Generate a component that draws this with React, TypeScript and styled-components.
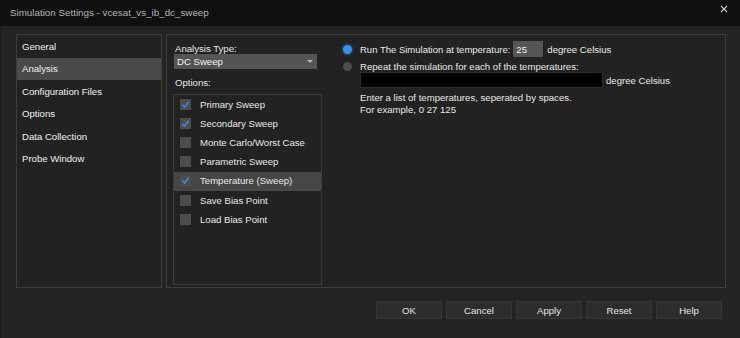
import * as React from "react";
import styled, { createGlobalStyle } from "styled-components";

const GlobalStyle = createGlobalStyle`
  html, body {
    margin: 0;
    padding: 0;
    background: #242522;
  }
  * {
    box-sizing: border-box;
  }
`;

const SWindow = styled.div`
  width: 740px;
  height: 338px;
  display: flex;
  flex-direction: column;
  font-family: "Liberation Sans", Arial, sans-serif;
  font-size: 9.6px;
  color: #e8e8e8;
  overflow: hidden;
`;

const STitleBar = styled.div`
  height: 26px;
  flex: none;
  display: flex;
  align-items: center;
  justify-content: space-between;
  padding: 0 10px 2px 10px;
  background: #101010;
  color: #b4b4b4;
  font-size: 9.8px;
`;

const SClose = styled.div`
  width: 10px;
  height: 10px;
  margin-top: -6px;
  margin-right: 1px;
  display: flex;
  align-items: center;
  justify-content: center;
`;

const SBody = styled.div`
  flex: 1;
  display: flex;
  flex-direction: column;
  padding: 8px 14px 0 15px;
  background: #242522;
  border-left: 1px solid #1c1d1b;
`;

const SPanels = styled.div`
  height: 254px;
  display: flex;
  gap: 4px;
`;

const SNav = styled.div`
  width: 146px;
  border: 1px solid #3c3d3a;
  background: #222320;
  display: flex;
  flex-direction: column;
`;

const SNavItem = styled.div<{ selected?: boolean }>`
  height: 22.5px;
  display: flex;
  align-items: center;
  padding-left: 5px;
  color: #f0f0f0;
  background: ${({ selected }) => (selected ? "#4a4a48" : "transparent")};
`;

const SMain = styled.div`
  flex: 1;
  border: 1px solid #3c3d3a;
  background: #222320;
  display: flex;
  padding: 6px 6px 2px 6px;
  gap: 21px;
`;

const SAnalysisColumn = styled.div`
  width: 149px;
  display: flex;
  flex-direction: column;
  padding-top: 2px;
`;

const SLabel = styled.div`
  height: 11px;
  line-height: 11px;
  padding-left: 2px;
`;

const SSelect = styled.div`
  height: 15px;
  width: 143px;
  margin-left: 1px;
  background: #545552;
  display: flex;
  align-items: center;
  justify-content: space-between;
  padding: 0 4px 0 3px;
  color: #f2f2f2;
`;

const SArrow = styled.div`
  width: 0;
  height: 0;
  border-left: 3px solid transparent;
  border-right: 3px solid transparent;
  border-top: 3px solid #b8b8b8;
`;

const SOptionsLabel = styled(SLabel)`
  margin-top: 8px;
`;

const SOptionList = styled.div`
  margin-top: 6px;
  height: 191px;
  border: 1px solid #3c3d3a;
  display: flex;
  flex-direction: column;
`;

const SOptionRow = styled.div<{ highlighted?: boolean }>`
  height: 19.2px;
  display: flex;
  align-items: center;
  padding-left: 6px;
  padding-bottom: 1px;
  gap: 9px;
  background: ${({ highlighted }) => (highlighted ? "#464745" : "transparent")};
`;

const SCheckbox = styled.div`
  width: 11px;
  height: 11px;
  background: #4d4e4c;
  display: flex;
  align-items: center;
  justify-content: center;
`;

const STempColumn = styled.div`
  flex: 1;
  display: flex;
  flex-direction: column;
`;

const SRadioRow = styled.div`
  display: flex;
  align-items: center;
  min-height: 16px;
`;

const SSecondRow = styled(SRadioRow)`
  margin-top: 3px;
  min-height: 12px;
`;

const SRadio = styled.div<{ checked?: boolean }>`
  width: 9px;
  height: 9px;
  border-radius: 50%;
  margin-right: 8px;
  background: ${({ checked }) => (checked ? "#2f95ee" : "#4c4d4b")};
  box-shadow: ${({ checked }) =>
    checked ? "0 0 2px 1px rgba(47, 149, 238, 0.35)" : "none"};
`;

const SRunLabel = styled.span`
  font-size: 9.5px;
`;

const STempInput = styled.div`
  width: 30px;
  height: 16px;
  margin-left: 3px;
  margin-right: 4px;
  background: #555654;
  color: #f2f2f2;
  display: flex;
  align-items: center;
  padding-left: 3px;
`;

const SListRow = styled.div`
  display: flex;
  align-items: center;
  margin-left: 17px;
`;

const SListInput = styled.div`
  width: 243px;
  height: 16px;
  background: #000;
  border: 1px solid #2c2c2c;
  margin-right: 3px;
`;

const SHint = styled.div`
  margin-left: 17px;
  line-height: 12.5px;
  margin-top: 3.5px;
`;

const SButtonRow = styled.div`
  display: flex;
  justify-content: flex-end;
  gap: 4px;
  margin-top: 13px;
  padding-right: 4px;
`;

const SButton = styled.div`
  width: 66px;
  height: 18px;
  background: #2d2e2c;
  border: 1px solid #363735;
  display: flex;
  align-items: center;
  justify-content: center;
  color: #e4e4e4;
`;

const navItems = [
  "General",
  "Analysis",
  "Configuration Files",
  "Options",
  "Data Collection",
  "Probe Window"
];

const options = [
  { label: "Primary Sweep", checked: true },
  { label: "Secondary Sweep", checked: true },
  { label: "Monte Carlo/Worst Case", checked: false },
  { label: "Parametric Sweep", checked: false },
  { label: "Temperature (Sweep)", checked: true, highlighted: true },
  { label: "Save Bias Point", checked: false },
  { label: "Load Bias Point", checked: false }
];

const buttons = ["OK", "Cancel", "Apply", "Reset", "Help"];

const Check = () => (
  <svg width="9" height="9" viewBox="0 0 9 9">
    <polyline
      points="1.5,4.8 3.6,7 7.6,1.8"
      fill="none"
      stroke="#2f8fe6"
      strokeWidth="1.5"
    />
  </svg>
);

const App = () => (
  <SWindow>
    <GlobalStyle />
    <STitleBar>
      <span>{`Simulation Settings - vcesat_vs_ib_dc_sweep`}</span>
      <SClose>
        <svg width="8" height="8" viewBox="0 0 8 8">
          <path d="M1 1 L7 7 M7 1 L1 7" stroke="#c8c8c8" strokeWidth="1.1" />
        </svg>
      </SClose>
    </STitleBar>
    <SBody>
      <SPanels>
        <SNav>
          {navItems.map(item => (
            <SNavItem key={item} selected={item === "Analysis"}>
              {item}
            </SNavItem>
          ))}
        </SNav>
        <SMain>
          <SAnalysisColumn>
            <SLabel>{`Analysis Type:`}</SLabel>
            <SSelect>
              <span>{`DC Sweep`}</span>
              <SArrow />
            </SSelect>
            <SOptionsLabel>{`Options:`}</SOptionsLabel>
            <SOptionList>
              {options.map(opt => (
                <SOptionRow key={opt.label} highlighted={opt.highlighted}>
                  <SCheckbox>{opt.checked && <Check />}</SCheckbox>
                  <span>{opt.label}</span>
                </SOptionRow>
              ))}
            </SOptionList>
          </SAnalysisColumn>
          <STempColumn>
            <SRadioRow>
              <SRadio checked />
              <SRunLabel>{`Run The Simulation at temperature:`}</SRunLabel>
              <STempInput>{`25`}</STempInput>
              <span>{`degree Celsius`}</span>
            </SRadioRow>
            <SSecondRow>
              <SRadio />
              <span>{`Repeat the simulation for each of the temperatures:`}</span>
            </SSecondRow>
            <SListRow>
              <SListInput />
              <span>{`degree Celsius`}</span>
            </SListRow>
            <SHint>
              {`Enter a list of temperatures, seperated by spaces.`}
              <br />
              {`For example, 0 27 125`}
            </SHint>
          </STempColumn>
        </SMain>
      </SPanels>
      <SButtonRow>
        {buttons.map(b => (
          <SButton key={b}>{b}</SButton>
        ))}
      </SButtonRow>
    </SBody>
  </SWindow>
);

export default App;
